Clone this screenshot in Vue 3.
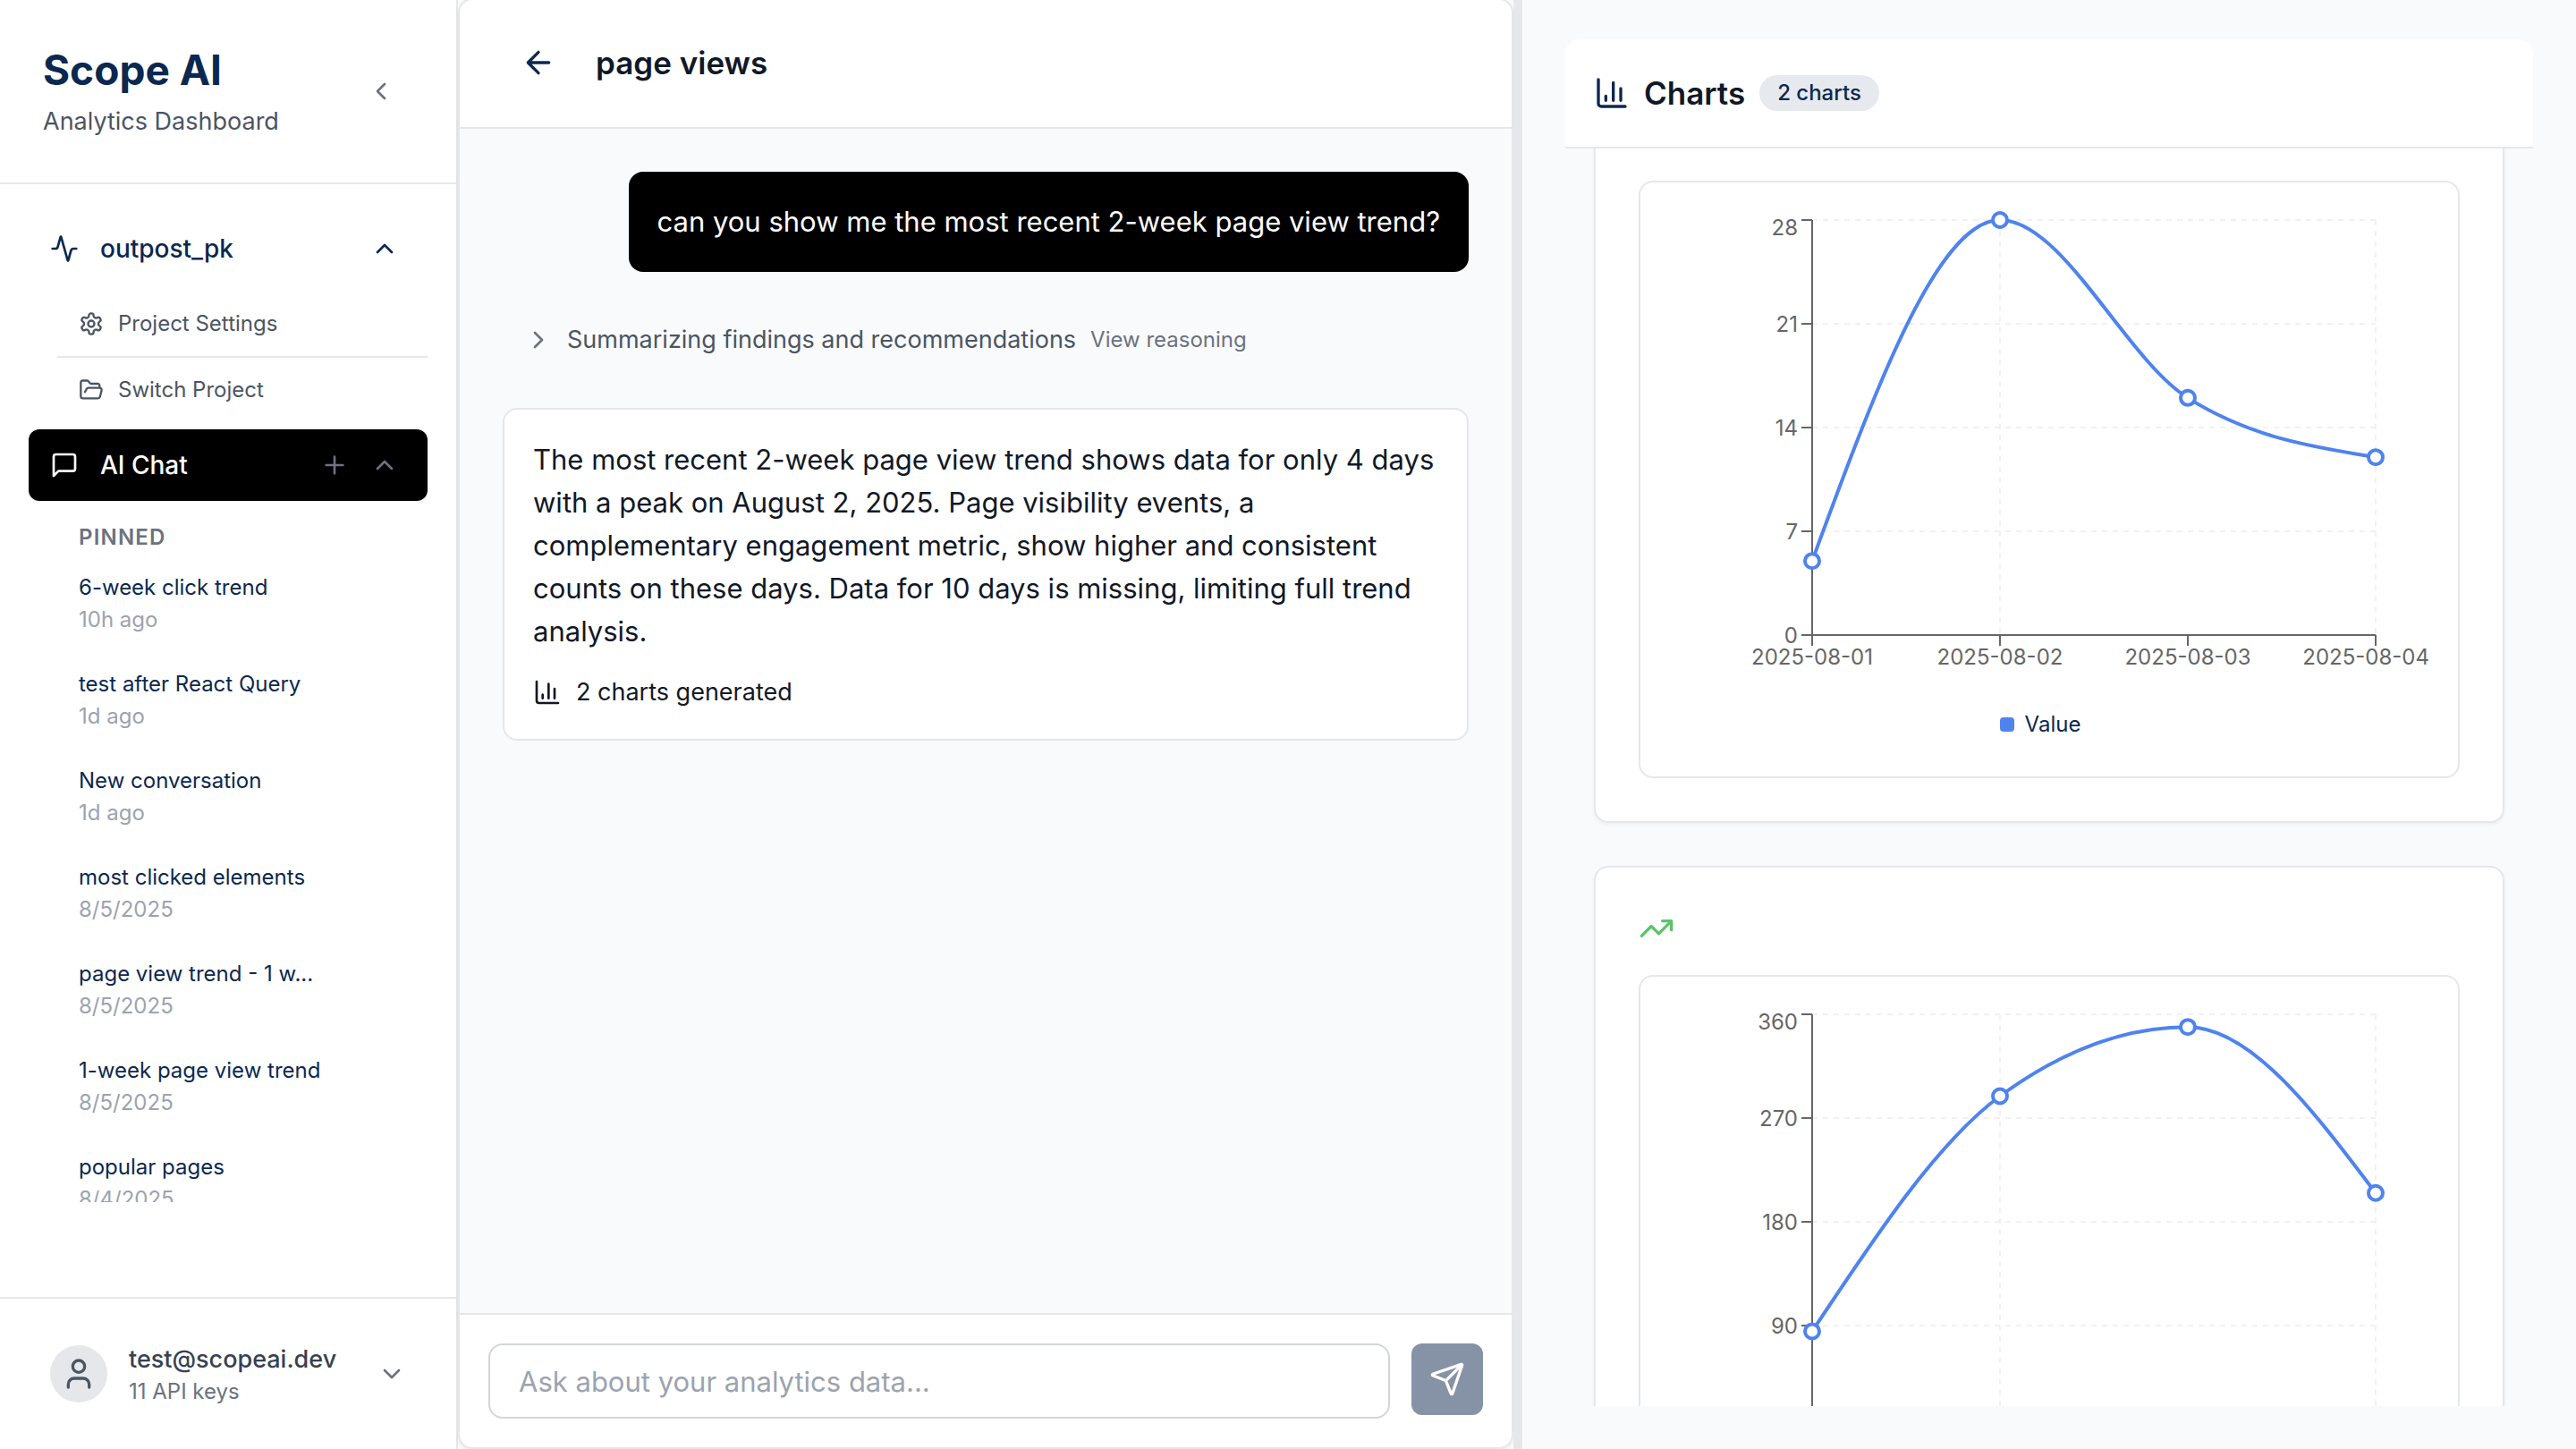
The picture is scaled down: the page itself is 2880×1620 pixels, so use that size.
<script setup>
import { onMounted, ref } from 'vue'

const conversations = [
  { title: '6-week click trend', when: '10h ago' },
  { title: 'test after React Query', when: '1d ago' },
  { title: 'New conversation', when: '1d ago' },
  { title: 'most clicked elements', when: '8/5/2025' },
  { title: 'page view trend - 1 w...', when: '8/5/2025' },
  { title: '1-week page view trend', when: '8/5/2025' },
  { title: 'popular pages', when: '8/4/2025' },
]

const days = ['2025-08-01', '2025-08-02', '2025-08-03', '2025-08-04']

// Plot area inside the 850 x 548 chart canvas
const plot = { left: 160, right: 790, top: 10, bottom: 474 }

// Monotone cubic interpolation: no overshoot between neighbouring points
function monotonePath(points) {
  const n = points.length
  const slope = []
  for (let i = 0; i < n - 1; i++) {
    slope.push((points[i + 1].y - points[i].y) / (points[i + 1].x - points[i].x))
  }
  const tangent = new Array(n).fill(0)
  for (let i = 1; i < n - 1; i++) {
    const a = slope[i - 1]
    const b = slope[i]
    const mean = (a + b) / 2
    tangent[i] = (Math.sign(a) + Math.sign(b)) * Math.min(Math.abs(a), Math.abs(b), Math.abs(mean) / 2) || 0
  }
  tangent[0] = (3 * slope[0] - tangent[1]) / 2
  tangent[n - 1] = (3 * slope[n - 2] - tangent[n - 2]) / 2
  let d = `M${points[0].x},${points[0].y}`
  for (let i = 0; i < n - 1; i++) {
    const p = points[i]
    const q = points[i + 1]
    const dx = (q.x - p.x) / 3
    d += `C${p.x + dx},${p.y + dx * tangent[i]},${q.x - dx},${q.y - dx * tangent[i + 1]},${q.x},${q.y}`
  }
  return d
}

function buildChart(id, values, max) {
  const xStep = (plot.right - plot.left) / (values.length - 1)
  const height = plot.bottom - plot.top
  const points = values.map((v, i) => ({
    x: plot.left + i * xStep,
    y: plot.bottom - (v / max) * height,
  }))
  const yTicks = [0, 1, 2, 3, 4].map((i) => {
    const y = plot.bottom - (i / 4) * height
    return { label: (max / 4) * i, y, textY: i === 4 ? y + 17 : y + 9 }
  })
  const xTicks = days.map((label, i) => ({
    label,
    x: points[i].x,
    textX: i === days.length - 1 ? 850 : points[i].x,
    anchor: i === days.length - 1 ? 'end' : 'middle',
  }))
  return { id, points, yTicks, xTicks, path: monotonePath(points) }
}

const charts = [
  buildChart('page-views', [5, 28, 16, 12], 28),
  buildChart('page-visibility', [85, 289, 349, 205], 360),
]
const gridColumns = [370, 790]

const message = ref('')
const chartList = ref(null)
onMounted(() => {
  chartList.value.scrollTop = 118
})
</script>

<template>
  <div class="app">
    <aside class="sidebar">
      <header class="brand">
        <div>
          <h1>Scope AI</h1>
          <p>Analytics Dashboard</p>
        </div>
        <button class="icon-button collapse" type="button" aria-label="Collapse sidebar">
          <svg class="icon md" viewBox="0 0 24 24"><path d="m15 18-6-6 6-6" /></svg>
        </button>
      </header>

      <nav class="nav">
        <button class="nav-item project" type="button">
          <svg class="icon md" viewBox="0 0 24 24"><path d="M22 12h-2.48a2 2 0 0 0-1.93 1.46l-2.35 8.36a.25.25 0 0 1-.48 0L9.24 2.18a.25.25 0 0 0-.48 0l-2.35 8.36A2 2 0 0 1 4.49 12H2" /></svg>
          <span class="grow">outpost_pk</span>
          <svg class="icon md" viewBox="0 0 24 24"><path d="m18 15-6-6-6 6" /></svg>
        </button>
        <div class="project-links">
          <a href="#settings">
            <svg class="icon sm" viewBox="0 0 24 24"><path d="M12.22 2h-.44a2 2 0 0 0-2 2v.18a2 2 0 0 1-1 1.73l-.43.25a2 2 0 0 1-2 0l-.15-.08a2 2 0 0 0-2.73.73l-.22.38a2 2 0 0 0 .73 2.73l.15.1a2 2 0 0 1 1 1.72v.51a2 2 0 0 1-1 1.74l-.15.09a2 2 0 0 0-.73 2.73l.22.38a2 2 0 0 0 2.73.73l.15-.08a2 2 0 0 1 2 0l.43.25a2 2 0 0 1 1 1.73V20a2 2 0 0 0 2 2h.44a2 2 0 0 0 2-2v-.18a2 2 0 0 1 1-1.73l.43-.25a2 2 0 0 1 2 0l.15.08a2 2 0 0 0 2.73-.73l.22-.39a2 2 0 0 0-.73-2.73l-.15-.08a2 2 0 0 1-1-1.74v-.5a2 2 0 0 1 1-1.74l.15-.09a2 2 0 0 0 .73-2.73l-.22-.38a2 2 0 0 0-2.73-.73l-.15.08a2 2 0 0 1-2 0l-.43-.25a2 2 0 0 1-1-1.73V4a2 2 0 0 0-2-2z" /><circle cx="12" cy="12" r="3" /></svg>
            Project Settings
          </a>
          <a href="#switch">
            <svg class="icon sm" viewBox="0 0 24 24"><path d="m6 14 1.5-2.9A2 2 0 0 1 9.24 10H20a2 2 0 0 1 1.94 2.5l-1.54 6a2 2 0 0 1-1.95 1.5H4a2 2 0 0 1-2-2V5a2 2 0 0 1 2-2h3.9a2 2 0 0 1 1.69.9l.81 1.2a2 2 0 0 0 1.67.9H18a2 2 0 0 1 2 2v2" /></svg>
            Switch Project
          </a>
        </div>

        <div class="nav-item chat-item">
          <svg class="icon md" viewBox="0 0 24 24"><path d="M21 15a2 2 0 0 1-2 2H7l-4 4V5a2 2 0 0 1 2-2h14a2 2 0 0 1 2 2z" /></svg>
          <span class="grow">AI Chat</span>
          <button class="icon-button" type="button" aria-label="New chat">
            <svg class="icon md" viewBox="0 0 24 24"><path d="M5 12h14M12 5v14" /></svg>
          </button>
          <button class="icon-button" type="button" aria-label="Hide chats">
            <svg class="icon md" viewBox="0 0 24 24"><path d="m18 15-6-6-6 6" /></svg>
          </button>
        </div>

        <section class="history">
          <h2>Pinned</h2>
          <a v-for="c in conversations" :key="c.title" href="#chat">
            <span class="chat-title">{{ c.title }}</span>
            <time>{{ c.when }}</time>
          </a>
        </section>
      </nav>

      <footer class="account">
        <button type="button">
          <span class="avatar">
            <svg class="icon lg" viewBox="0 0 24 24"><path d="M19 21v-2a4 4 0 0 0-4-4H9a4 4 0 0 0-4 4v2" /><circle cx="12" cy="7" r="4" /></svg>
          </span>
          <span class="grow">
            <span class="email">test@scopeai.dev</span>
            <span class="keys">11 API keys</span>
          </span>
          <svg class="icon md" viewBox="0 0 24 24"><path d="m6 9 6 6 6-6" /></svg>
        </button>
      </footer>
    </aside>

    <main class="chat">
      <header class="chat-header">
        <button class="icon-button back" type="button" aria-label="Back">
          <svg class="icon lg" viewBox="0 0 24 24"><path d="m12 19-7-7 7-7M19 12H5" /></svg>
        </button>
        <h2>page views</h2>
      </header>

      <div class="messages">
        <p class="question">can you show me the most recent 2-week page view trend?</p>
        <button class="reasoning" type="button">
          <svg class="icon md" viewBox="0 0 24 24"><path d="m9 18 6-6-6-6" /></svg>
          <span>Summarizing findings and recommendations</span>
          <small>View reasoning</small>
        </button>
        <article class="answer">
          <p>The most recent 2-week page view trend shows data for only 4 days with a peak on August 2, 2025. Page visibility events, a complementary engagement metric, show higher and consistent counts on these days. Data for 10 days is missing, limiting full trend analysis.</p>
          <div class="generated">
            <svg class="icon md" viewBox="0 0 24 24"><path d="M3 3v16a2 2 0 0 0 2 2h16M18 17V9M13 17V5M8 17v-3" /></svg>
            2 charts generated
          </div>
        </article>
      </div>

      <form class="composer" @submit.prevent>
        <input v-model="message" type="text" aria-label="Message" placeholder="Ask about your analytics data..." />
        <button type="submit" aria-label="Send">
          <svg class="icon lg" viewBox="0 0 24 24"><path d="M14.536 21.686a.5.5 0 0 0 .937-.024l6.5-19a.496.496 0 0 0-.635-.635l-19 6.5a.5.5 0 0 0-.024.937l7.93 3.18a2 2 0 0 1 1.112 1.11zM21.854 2.147l-10.94 10.939" /></svg>
        </button>
      </form>
    </main>

    <div class="resizer" role="separator"></div>

    <section class="charts">
      <header class="charts-header">
        <svg class="icon lg" viewBox="0 0 24 24"><path d="M3 3v16a2 2 0 0 0 2 2h16M18 17V9M13 17V5M8 17v-3" /></svg>
        <h2>Charts</h2>
        <span class="badge">2 charts</span>
      </header>
      <div ref="chartList" class="chart-list">
        <article v-for="chart in charts" :key="chart.id" class="chart-card">
          <svg class="icon lg trend" viewBox="0 0 24 24"><path d="M16 7h6v6M22 7l-8.5 8.5-5-5L2 17" /></svg>
          <div class="chart-box">
            <svg class="chart" viewBox="0 0 850 548" role="img" :aria-label="chart.id">
              <g class="grid">
                <line v-for="t in chart.yTicks" :key="t.y" :x1="plot.left" :x2="plot.right" :y1="t.y" :y2="t.y" />
                <line v-for="x in gridColumns" :key="x" :x1="x" :x2="x" :y1="plot.top" :y2="plot.bottom" />
              </g>
              <g class="axis">
                <path :d="`M${plot.left},${plot.top}V${plot.bottom}H${plot.right}`" />
                <line v-for="t in chart.yTicks" :key="t.y" :x1="plot.left - 12" :x2="plot.left" :y1="t.y" :y2="t.y" />
                <line v-for="t in chart.xTicks" :key="t.x" :x1="t.x" :x2="t.x" :y1="plot.bottom" :y2="plot.bottom + 12" />
              </g>
              <g class="labels">
                <text v-for="t in chart.yTicks" :key="t.y" :x="plot.left - 16" :y="t.textY" text-anchor="end">{{ t.label }}</text>
                <text v-for="t in chart.xTicks" :key="t.x" :x="t.textX" y="507" :text-anchor="t.anchor">{{ t.label }}</text>
              </g>
              <path class="line" :d="chart.path" />
              <circle v-for="p in chart.points" :key="p.x" class="dot" :cx="p.x" :cy="p.y" r="8" />
            </svg>
            <div class="legend"><i></i>Value</div>
          </div>
        </article>
      </div>
    </section>
  </div>
</template>

<style>
body {
  margin: 0;
}
</style>

<style scoped>
.app {
  --navy: #0b2850;
  --ink: #111827;
  --line: #e5e7eb;
  --canvas: #f9fafc;
  display: grid;
  grid-template-columns: 512px minmax(0, 1fr) 8px minmax(0, 1fr);
  grid-template-rows: minmax(0, 1fr);
  height: 100vh;
  overflow: hidden;
  background: var(--canvas);
  color: var(--ink);
  font: 400 27px/40px Inter, "Liberation Sans", sans-serif;
}
.app *,
.app {
  box-sizing: border-box;
}
h1, h2, p {
  margin: 0;
}
button, input {
  margin: 0;
  padding: 0;
  border: 0;
  background: none;
  color: inherit;
  font: inherit;
  text-align: left;
}
a {
  color: inherit;
  text-decoration: none;
}
.icon {
  flex: none;
  display: block;
  fill: none;
  stroke: currentColor;
  stroke-width: 2;
  stroke-linecap: round;
  stroke-linejoin: round;
}
.sm { width: 28px; height: 28px; }
.md { width: 32px; height: 32px; }
.lg { width: 40px; height: 40px; }
.grow {
  flex: 1;
}
.icon-button {
  display: flex;
  align-items: center;
  justify-content: center;
}

.sidebar {
  display: flex;
  flex-direction: column;
  min-height: 0;
  background: #fff;
  border-right: 2px solid var(--line);
}
.brand {
  display: flex;
  align-items: center;
  justify-content: space-between;
  padding: 48px;
  border-bottom: 2px solid var(--line);
}
.brand h1 {
  color: var(--navy);
  font-size: 46px;
  font-weight: 700;
  line-height: 60px;
}
.brand p {
  margin-top: 8px;
  color: #4b5563;
}
.collapse {
  width: 72px;
  height: 72px;
  color: #6b7280;
}
.nav {
  flex: 1;
  display: flex;
  flex-direction: column;
  min-height: 0;
  padding: 32px 32px 106px;
}
.nav-item {
  flex: none;
  display: flex;
  align-items: center;
  gap: 24px;
  height: 80px;
  padding: 0 32px 0 24px;
  border-radius: 12px;
  font-size: 28px;
  font-weight: 500;
}
.project {
  color: var(--navy);
}
.project-links {
  flex: none;
  margin: 8px 0 8px 32px;
  color: #4b5563;
  font-size: 24px;
}
.project-links a {
  display: flex;
  align-items: center;
  gap: 16px;
  height: 72px;
  padding-left: 24px;
}
.project-links a + a {
  height: 74px;
  border-top: 2px solid var(--line);
}
.chat-item {
  background: #000;
  color: #fff;
}
.chat-item .icon-button {
  color: #6b7280;
}
.history {
  flex: 1;
  min-height: 0;
  overflow: hidden;
  padding: 25px 0 0 56px;
  font-size: 24px;
  line-height: 36px;
}
.history h2 {
  margin-bottom: 4px;
  color: #6b7280;
  font-size: 24px;
  font-weight: 600;
  line-height: 32px;
  letter-spacing: 0.05em;
  text-transform: uppercase;
}
.history a {
  display: block;
  padding: 18px 0;
}
.chat-title {
  display: block;
  color: var(--navy);
}
.history time {
  display: block;
  color: #9ca3af;
}
.account {
  padding: 32px;
  border-top: 2px solid var(--line);
}
.account button {
  display: flex;
  align-items: center;
  gap: 24px;
  width: 100%;
  padding: 16px 24px;
  color: #6b7280;
}
.avatar {
  display: flex;
  align-items: center;
  justify-content: center;
  width: 64px;
  height: 64px;
  border-radius: 50%;
  background: var(--line);
  color: #4b5563;
}
.email {
  display: block;
  color: #374151;
  font-weight: 500;
}
.keys {
  display: block;
  font-size: 24px;
  line-height: 32px;
}

.chat {
  display: flex;
  flex-direction: column;
  min-width: 0;
  margin-top: -2px;
  overflow: hidden;
  border: 2px solid var(--line);
  border-radius: 16px;
  background: #fff;
  box-shadow: 0 2px 4px rgba(0, 0, 0, 0.05);
}
.chat-header {
  flex: none;
  display: flex;
  align-items: center;
  gap: 24px;
  height: 144px;
  padding: 0 48px 2px;
  border-bottom: 2px solid var(--line);
}
.chat-header h2,
.charts-header h2 {
  font-size: 35px;
  font-weight: 600;
  line-height: 56px;
}
.back {
  width: 80px;
  height: 80px;
  color: var(--navy);
}
.messages {
  flex: 1;
  min-height: 0;
  display: flex;
  flex-direction: column;
  gap: 48px;
  padding: 48px;
  background: var(--canvas);
  font-size: 31px;
  line-height: 48px;
}
.question {
  align-self: flex-end;
  padding: 32px;
  border-radius: 16px;
  background: #000;
  color: #fff;
}
.reasoning {
  display: flex;
  align-items: center;
  gap: 16px;
  height: 56px;
  padding: 0 24px;
  color: #6b7280;
  font-size: 27px;
}
.reasoning span {
  color: #4b5563;
}
.reasoning small {
  font-size: 24px;
}
.answer {
  padding: 32px;
  border: 2px solid var(--line);
  border-radius: 16px;
  background: #fff;
}
.generated {
  display: flex;
  align-items: center;
  gap: 16px;
  margin-top: 24px;
  font-size: 27px;
  line-height: 40px;
}
.composer {
  flex: none;
  display: flex;
  align-items: flex-start;
  gap: 24px;
  padding: 32px;
  border-top: 2px solid var(--line);
}
.composer input {
  flex: 1;
  min-width: 0;
  height: 84px;
  padding: 0 32px;
  border: 2px solid #d1d5db;
  border-radius: 16px;
  font-size: 31px;
}
.composer input::placeholder {
  color: #9ca3af;
  opacity: 1;
}
.composer button {
  display: flex;
  align-items: center;
  justify-content: center;
  width: 80px;
  height: 80px;
  border-radius: 12px;
  background: #8693a7;
  color: #fff;
}

.resizer {
  background: var(--line);
}
.charts {
  display: flex;
  flex-direction: column;
  min-width: 0;
  min-height: 0;
  padding: 44px 48px 48px;
  border-left: 2px solid var(--line);
}
.charts-header {
  flex: none;
  display: flex;
  align-items: center;
  gap: 16px;
  padding: 32px;
  border-bottom: 2px solid var(--line);
  border-radius: 16px 16px 0 0;
  background: #fff;
}
.charts-header .icon {
  color: var(--navy);
}
.badge {
  padding: 0 20px;
  border-radius: 20px;
  background: #e6e9ed;
  color: var(--navy);
  font-size: 24px;
  font-weight: 500;
}
.chart-list {
  flex: 1;
  display: flex;
  flex-direction: column;
  gap: 48px;
  min-height: 0;
  padding: 32px;
  overflow-y: auto;
  scrollbar-width: none;
}
.chart-card {
  flex: none;
  display: flex;
  flex-direction: column;
  gap: 32px;
  padding: 48px;
  border: 2px solid var(--line);
  border-radius: 16px;
  background: #fff;
  box-shadow: 0 2px 4px rgba(0, 0, 0, 0.05);
}
.trend {
  color: #5cc46a;
}
.chart-box {
  padding: 32px;
  border: 2px solid var(--line);
  border-radius: 16px;
}
.chart {
  display: block;
  width: 100%;
  overflow: visible;
}
.grid line {
  stroke: #f1f1f2;
  stroke-width: 2;
  stroke-dasharray: 6 6;
}
.axis line,
.axis path {
  fill: none;
  stroke: #666;
  stroke-width: 2;
}
.labels {
  fill: #666;
  font-size: 24px;
}
.line {
  fill: none;
  stroke: #4f83ee;
  stroke-width: 4;
}
.dot {
  fill: #fff;
  stroke: #4f83ee;
  stroke-width: 4;
}
.legend {
  display: flex;
  align-items: center;
  justify-content: center;
  gap: 12px;
  height: 52px;
  padding: 0 60px 0 40px;
  color: var(--navy);
  font-size: 24px;
}
.legend i {
  width: 16px;
  height: 16px;
  border-radius: 4px;
  background: #4f83ee;
}
</style>
